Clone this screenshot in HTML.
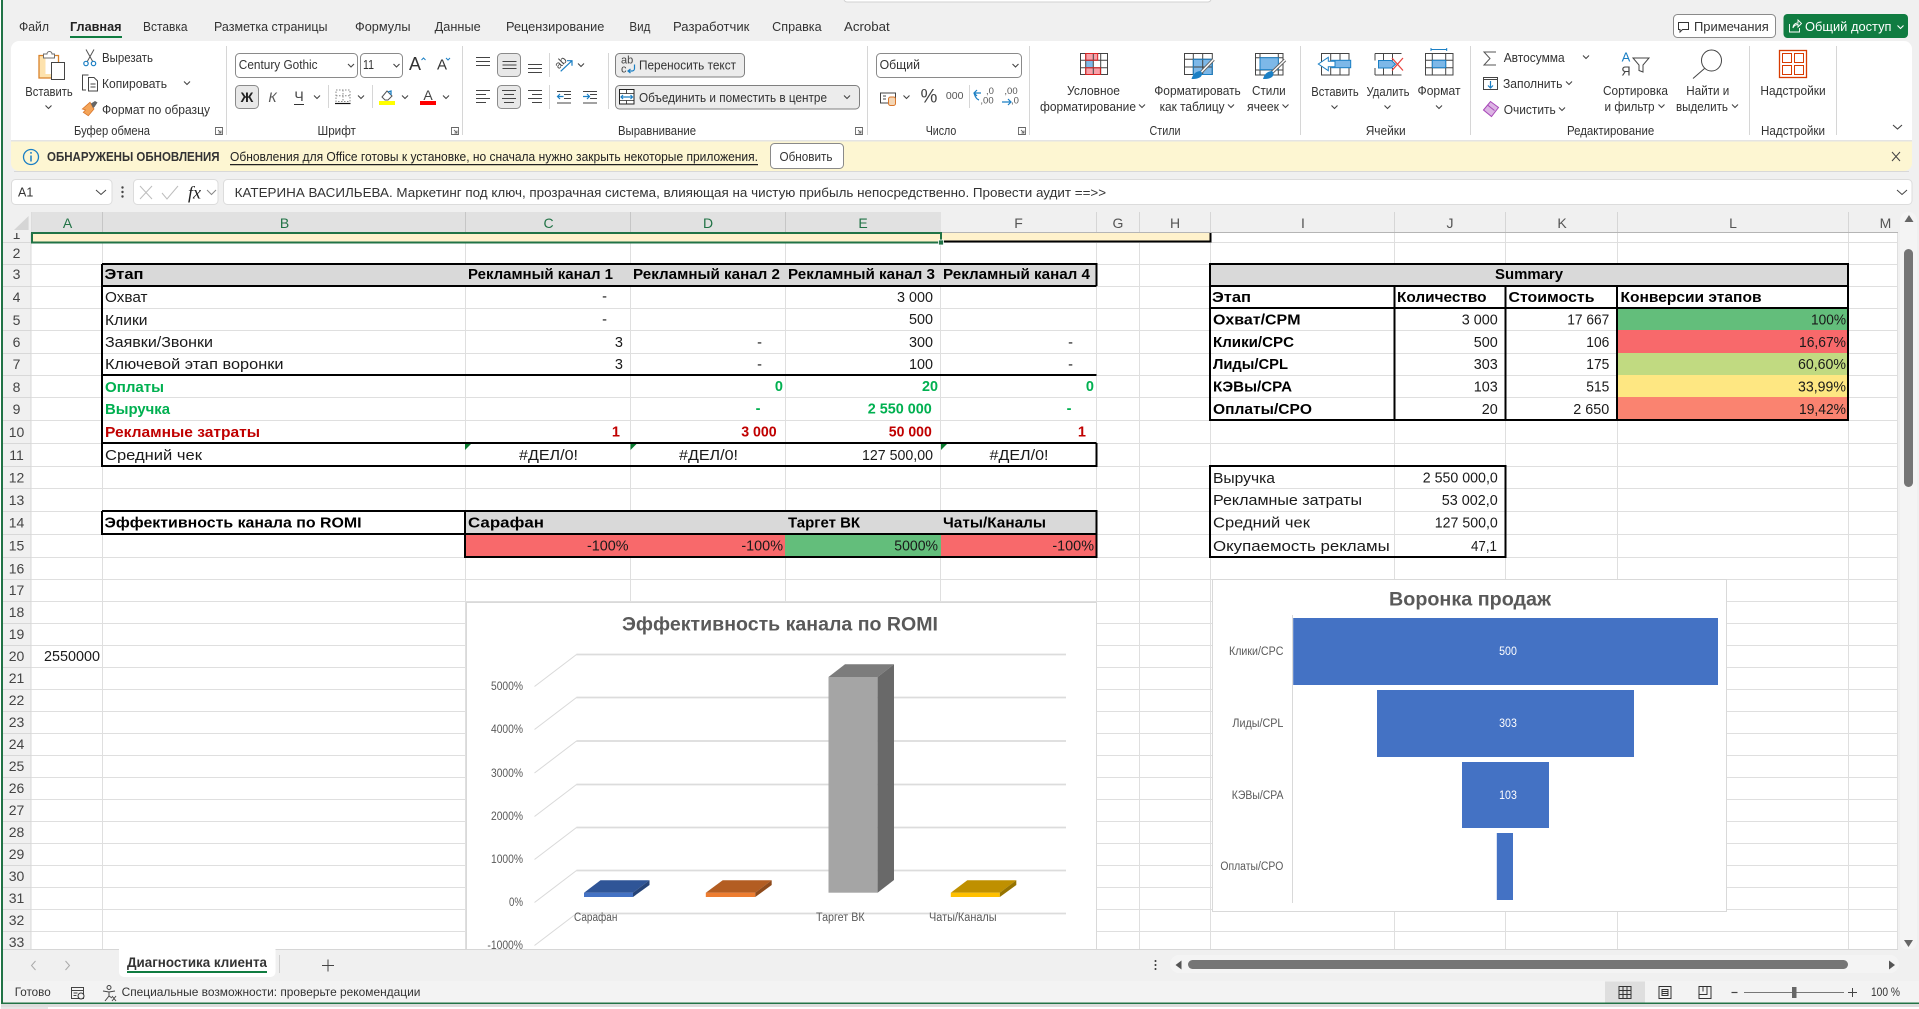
<!DOCTYPE html>
<html lang="ru"><head><meta charset="utf-8"><title>Excel</title>
<style>
html,body{margin:0;padding:0;background:#fff;width:1919px;height:1009px;overflow:hidden}
svg{display:block;position:absolute;left:0;top:0}
text{font-family:"Liberation Sans","DejaVu Sans",sans-serif;dominant-baseline:central;fill:#333;font-size:12.5px}
.m{text-anchor:middle}.e{text-anchor:end}
.b{font-weight:700}
.c text,text.c{font-size:14.5px;fill:#1a1a1a;transform:translateY(1px)}
.cb text{font-size:14.5px;font-weight:700;fill:#000;transform:translateY(1px)}
.g text{font-size:14.5px;font-weight:700;fill:#00b050;transform:translateY(1px)}
.r text{font-size:14.5px;font-weight:700;fill:#c00000;transform:translateY(1px)}
.rh text{font-size:14px;fill:#444;text-anchor:middle}
.ch text{font-size:14px;text-anchor:middle}
.ax text{font-size:11.5px;fill:#595959;transform:translateY(1px)}
.ln{fill:none;stroke:#444;stroke-width:1}
.bl{fill:none;stroke:#1b7fc4;stroke-width:1.2}
</style></head><body>
<svg width="1919" height="1009" viewBox="0 0 1919 1009" xmlns="http://www.w3.org/2000/svg">
<defs><path id="cv" d="M-3-1.5L0 1.5 3-1.5" fill="none" stroke="#444" stroke-width="1.1"/></defs>
<rect width="1919" height="1009" fill="#f0f0f0"/>
<rect x="1" y="0" width="2" height="1003" fill="#217346"/>
<rect x="0" y="0" width="1" height="1009" fill="#fff"/>

<!-- search box bottom -->
<rect x="844" y="-6" width="367" height="8" rx="3" fill="#fff" stroke="#d2d2d2"/>

<!-- tabs -->
<g>
<text x="19" y="27" textLength="30" lengthAdjust="spacingAndGlyphs">Файл</text>
<text x="70" y="27" textLength="51.5" lengthAdjust="spacingAndGlyphs" class="b" style="fill:#222">Главная</text>
<rect x="70" y="36" width="52" height="2" fill="#107c41"/>
<text x="143" y="27" textLength="44.5" lengthAdjust="spacingAndGlyphs">Вставка</text>
<text x="214" y="27" textLength="113.5" lengthAdjust="spacingAndGlyphs">Разметка страницы</text>
<text x="355" y="27" textLength="55.5" lengthAdjust="spacingAndGlyphs">Формулы</text>
<text x="434.7" y="27" textLength="46" lengthAdjust="spacingAndGlyphs">Данные</text>
<text x="506" y="27" textLength="98.4" lengthAdjust="spacingAndGlyphs">Рецензирование</text>
<text x="629.4" y="27" textLength="21" lengthAdjust="spacingAndGlyphs">Вид</text>
<text x="673" y="27" textLength="76.4" lengthAdjust="spacingAndGlyphs">Разработчик</text>
<text x="772.2" y="27" textLength="49.4" lengthAdjust="spacingAndGlyphs">Справка</text>
<text x="844" y="27" textLength="45.7" lengthAdjust="spacingAndGlyphs">Acrobat</text>
</g>

<!-- top right buttons -->
<rect x="1673.5" y="14.5" width="102" height="23" rx="4" fill="#fff" stroke="#8a8a8a"/>
<path d="M1678.500 22.500h10v7h-6l-2.500 2.500v-2.500h-1.500z" fill="none" stroke="#333"/>
<text x="1694" y="27" textLength="74.700" lengthAdjust="spacingAndGlyphs">Примечания</text>
<rect x="1783.500" y="14" width="124.500" height="24" rx="4" fill="#107c41"/>
<path d="M1789.500 24v8h10v-4M1793 28c0-3 2-5 5-5v-3l3.500 3.500L1798 27v-2.500c-2 0-4 1-5 3.500z" fill="none" stroke="#fff" stroke-width=".9"/>
<text x="1805" y="27" textLength="86.500" lengthAdjust="spacingAndGlyphs" style="fill:#fff">Общий доступ</text>
<path d="M1897.500 25.500l3 3 3-3" fill="none" stroke="#fff" stroke-width="1.100"/>

<!-- ribbon panel -->
<path d="M11 140V49a8 8 0 0 1 8-8H1904a8 8 0 0 1 8 8V140z" fill="#fff"/>
<!-- banner -->
<path d="M11 141H1912V163a8 8 0 0 1-8 8H19a8 8 0 0 1-8-8z" fill="#fdf6d2"/>
<rect x="11" y="140" width="1901" height="1.500" fill="#e4e4e4"/>
<path d="M14 171.500H1909" stroke="#d8d8d8" stroke-width="1"/>

<!-- ribbon separators -->
<path d="M226.500 46V135M462.500 46V135M867.500 46V135M1029.500 46V135M1300.500 46V135M1470.500 46V135M1749.500 46V135M1836.500 46V135" stroke="#d6d6d6"/>
<path d="M328.500 85V108M372.500 85V108M549.500 53V77M549.500 85V109M608.500 53V109M969.500 85V108" stroke="#d6d6d6"/>

<!-- clipboard group -->
<rect x="39" y="55" width="19.500" height="23" fill="#fff"/>
<path d="M39.500 55.500h6v22.500h-6zM39.500 74h12v4h-12z" fill="#fde2ad"/>
<path d="M44 55.500h-5v22.500h13M55 55.500h3.500v7" fill="none" stroke="#d9822b" stroke-width="1.300"/>
<path d="M43.500 58v-4h3.500a2.500 2.500 0 0 1 5 0h2.500v4z" fill="#fff" stroke="#6e6e6e"/>
<rect x="51.500" y="62.500" width="13" height="17" fill="#fff" stroke="#444"/>
<text x="49" y="92" class="m" textLength="47.400" lengthAdjust="spacingAndGlyphs">Вставить</text>
<use href="#cv" x="48.500" y="107"/>

<path d="M86 49.500l7 12.500M94 49.500l-7 12.500" stroke="#555" fill="none"/>
<circle cx="86" cy="63.500" r="2.200" fill="none" stroke="#1b7fc4" stroke-width="1.200"/><circle cx="93.500" cy="63.500" r="2.200" fill="none" stroke="#1b7fc4" stroke-width="1.200"/>
<text x="102" y="58" textLength="51" lengthAdjust="spacingAndGlyphs">Вырезать</text>
<path d="M86 90h-3.500v-15h6M90 77.500h4l3.500 3.500v10h-9V77.500zM90.500 84h5M90.500 87h5" class="ln"/>
<text x="102" y="84" textLength="65" lengthAdjust="spacingAndGlyphs">Копировать</text>
<use href="#cv" x="187" y="83"/>
<path d="M82.300 109L90 102.300 94 109 88.300 115.700 83.300 112.300 85.500 110z" fill="#f4a458" stroke="#d9762b" stroke-width=".8"/>
<path d="M91 103.500l4-2.500 2.500 1.500-3 4.500-1.500 1z" fill="#666"/>
<text x="102" y="110" textLength="108" lengthAdjust="spacingAndGlyphs">Формат по образцу</text>
<text x="112" y="131" class="m" textLength="76" lengthAdjust="spacingAndGlyphs">Буфер обмена</text>
<path id="lnc" d="M215.500 127.500h7v7h-7zM218 130l3 3M221 130.500v2.500h-2.500" fill="none" stroke="#666" stroke-width=".9"/>

<!-- font group -->
<rect x="235.500" y="53.500" width="122" height="24" rx="4" fill="#fff" stroke="#8a8a8a"/>
<text x="238.800" y="65" textLength="78.800" lengthAdjust="spacingAndGlyphs">Century Gothic</text>
<use href="#cv" x="351" y="65.500"/>
<rect x="360.500" y="53.500" width="42" height="24" rx="4" fill="#fff" stroke="#8a8a8a"/>
<text x="363" y="65" textLength="11" lengthAdjust="spacingAndGlyphs">11</text>
<use href="#cv" x="396.500" y="65.500"/>
<text x="415" y="64" class="m" style="font-size:18px">A</text><path d="M421.500 60l2-2 2 2" fill="none" stroke="#1b7fc4"/>
<text x="442" y="65" class="m" style="font-size:15px">A</text><path d="M446 58l2 2 2-2" fill="none" stroke="#1b7fc4"/>
<rect x="235.500" y="85.500" width="23" height="23" rx="4" fill="#e8e8e8" stroke="#8a8a8a"/>
<text x="247" y="97" class="m b" style="font-size:14px;fill:#222">Ж</text>
<text x="272.500" y="97" class="m" style="font-style:italic;font-size:14px;fill:#555">К</text>
<text x="299" y="96" class="m" style="font-size:14px;fill:#444">Ч</text><path d="M294 104.500h10" stroke="#333"/>
<use href="#cv" x="317" y="97"/>
<path d="M336 90h14v11.500h-14zM343 90v11.500M336 95.800h14" fill="none" stroke="#888" stroke-dasharray="1.500 1.500"/><path d="M335 103.500h15.500" stroke="#111" stroke-width="1.200"/>
<use href="#cv" x="361" y="97"/>
<path d="M382 97l5-6 5 5-4 4h-3z" fill="none" stroke="#555"/><path d="M388 92l3-1 0 4" fill="none" stroke="#1b7fc4" stroke-width="1.300"/>
<rect x="379" y="101" width="16" height="4" fill="#ffff00"/>
<use href="#cv" x="405" y="97"/>
<text x="428" y="95" class="m" style="font-size:14px;fill:#444">A</text>
<rect x="420" y="101" width="16" height="4" fill="#f00"/>
<use href="#cv" x="446" y="97"/>
<text x="336.700" y="131" class="m" textLength="38.400" lengthAdjust="spacingAndGlyphs">Шрифт</text>
<path d="M451.500 127.500h7v7h-7zM454 130l3 3M457 130.500v2.500h-2.500" fill="none" stroke="#666" stroke-width=".9"/>

<!-- alignment group -->
<rect x="497.500" y="53.500" width="23" height="23" rx="4" fill="#e8e8e8" stroke="#8a8a8a"/>
<rect x="497.500" y="85.500" width="23" height="23" rx="4" fill="#e8e8e8" stroke="#8a8a8a"/>
<path d="M476 57.500h14M476 61.500h14M476 65.500h14" class="ln"/>
<path d="M502.500 61.500h14M502.500 65h14M502.500 68.500h14" class="ln"/>
<path d="M528 64.500h14M528 68.500h14M528 72.500h14" class="ln"/>
<path d="M476 90.500h14M476 94.500h10M476 98.500h14M476 102.500h10" class="ln"/>
<path d="M502 90.500h14M504 94.500h10M502 98.500h14M504 102.500h10" class="ln"/>
<path d="M528 90.500h14M532 94.500h10M528 98.500h14M532 102.500h10" class="ln"/>
<text x="561" y="63" class="m" transform="rotate(-45 561 63)" style="font-size:11px;fill:#444">ab</text>
<path d="M560.700 71.300L572 60.700M567 60.700h5v5" class="bl"/>
<use href="#cv" x="581" y="65"/>
<path d="M557 91.500h14M564 94.500h7M564 98.500h7M557 103h14" class="ln"/>
<path d="M557.500 96.500h6M560 94l-2.500 2.500 2.500 2.500" class="bl"/>
<path d="M583 91.500h14M590 94.500h7M590 98.500h7M583 103h14" class="ln"/>
<path d="M583 96.500h6.500M587 94l2.500 2.500-2.500 2.500" class="bl"/>
<rect x="615.500" y="53.500" width="129" height="23.500" rx="4" fill="#ececec" stroke="#7f7f7f"/>
<text x="621" y="60.500" style="font-size:11px;fill:#444">ab</text><text x="621" y="69.500" style="font-size:11px;fill:#444">c</text>
<path d="M634.500 64.500v4a2.500 2.500 0 0 1-2.500 2.500h-4M630.500 69l-2.500 2 2.500 2" class="bl"/>
<text x="639" y="65.500" textLength="97" lengthAdjust="spacingAndGlyphs">Переносить текст</text>
<rect x="615.500" y="85.500" width="244" height="23.500" rx="4" fill="#ececec" stroke="#7f7f7f"/>
<rect x="619.500" y="89.500" width="14.500" height="14.500" fill="#fff" stroke="#222"/><path d="M619.500 93.500h14.500M619.500 100.500h14.500M626.500 89.500v4M626.500 100.500v3.500" stroke="#222" stroke-width=".8"/>
<path d="M621 97h11.500M623 95l-2 2 2 2M630.500 95l2 2-2 2" class="bl"/>
<text x="639" y="98" textLength="188" lengthAdjust="spacingAndGlyphs">Объединить и поместить в центре</text>
<use href="#cv" x="847" y="97"/>
<text x="657" y="131" class="m" textLength="78" lengthAdjust="spacingAndGlyphs">Выравнивание</text>
<path d="M855.500 127.500h7v7h-7zM858 130l3 3M861 130.500v2.500h-2.500" fill="none" stroke="#666" stroke-width=".9"/>

<!-- number group -->
<rect x="876.500" y="53.500" width="145" height="24" rx="4" fill="#fff" stroke="#8a8a8a"/>
<text x="879.600" y="65" textLength="40.400" lengthAdjust="spacingAndGlyphs">Общий</text>
<use href="#cv" x="1015.500" y="65.500"/>
<rect x="880.500" y="93" width="15" height="10" fill="#fff" stroke="#444"/><path d="M883 96h3M883 99h3" stroke="#444"/>
<rect x="888.500" y="97" width="7" height="8.500" rx="2" fill="#f4d6b5" stroke="#d9762b"/>
<use href="#cv" x="906.500" y="97"/>
<text x="929" y="97" class="m" style="font-size:19px;fill:#444">%</text>
<text x="954.700" y="96" class="m" style="font-size:10.500px;fill:#555">000</text>
<text x="990" y="91.500" style="font-size:9.500px;fill:#555" class="m">,0</text><text x="987" y="101" style="font-size:9.500px;fill:#555" class="m">,00</text>
<path d="M981 93h-7M977 90l-3 3 3 3M974 93c1 3 2 6 5 7" class="bl"/>
<text x="1011" y="91.500" style="font-size:9.500px;fill:#555" class="m">,00</text><text x="1015" y="101" style="font-size:9.500px;fill:#555" class="m">,0</text>
<path d="M1002 102h9M1008 99l3 3-3 3" class="bl"/>
<text x="941" y="131" class="m" textLength="30.600" lengthAdjust="spacingAndGlyphs">Число</text>
<path d="M1018.500 127.500h7v7h-7zM1021 130l3 3M1024 130.500v2.500h-2.500" fill="none" stroke="#666" stroke-width=".9"/>

<!-- styles group -->
<g transform="translate(1080 53)">
<rect x="5.700" y=".5" width="12" height="6.800" fill="#f9a0a8"/><rect x="5.700" y="7.300" width="7.600" height="7.400" fill="#7db8e8"/><rect x="5.700" y="14.700" width="14.700" height="6.800" fill="#f9a0a8"/>
<path d="M.5.500h27v21h-27zM.5 7.300h27M.5 14.700h27M13.300 .500v21M20.700 .500v21M5.700 .500v21" fill="none" stroke="#444"/>
<path d="M5.700 .500h12v6.800H5.700zM5.700 14.700h14.700v6.800H5.700z" fill="none" stroke="#d22"/>
</g>
<text x="1093.500" y="91" class="m" textLength="53" lengthAdjust="spacingAndGlyphs">Условное</text>
<text x="1040" y="107" textLength="96" lengthAdjust="spacingAndGlyphs">форматирование</text>
<use href="#cv" x="1142" y="106"/>
<g transform="translate(1184 53)">
<rect x="9.300" y="6.300" width="19" height="15.200" fill="#7db8e8"/>
<path d="M.5.500h27.800v21h-27.800zM.5 6.300h27.800M.5 14h27.800M9.300 .500v21M18.700 .500v21" fill="none" stroke="#444"/>
<path d="M9.300 6.300h19v15.200h-19z" fill="none" stroke="#1b7fc4"/>
<path d="M29.500 6.500L17.500 19" stroke="#666" stroke-width="3.400"/><path d="M29.500 6.500L17.500 19" stroke="#fff" stroke-width="1.400"/>
<path d="M7.500 26c1.500-5 4-7.500 9-8 2 2 2 4 0 6-3 2-6 2-9 2z" fill="#1b7fc4"/>
</g>
<text x="1197.500" y="91" class="m" textLength="86.500" lengthAdjust="spacingAndGlyphs">Форматировать</text>
<text x="1159.600" y="107" textLength="65" lengthAdjust="spacingAndGlyphs">как таблицу</text>
<use href="#cv" x="1231" y="106"/>
<g transform="translate(1255 53)">
<path d="M.5.500h27.500v21.500h-27.500zM.5 4.700h27.500M.5 17h27.500M5 .500v21.500M23.300 .500v21.500" fill="none" stroke="#444"/>
<rect x="5" y="4.700" width="18.300" height="12" fill="#7db8e8" stroke="#1b7fc4"/>
<path d="M30 7L17 19.500" stroke="#666" stroke-width="3.400"/><path d="M30 7L17 19.500" stroke="#fff" stroke-width="1.400"/>
<path d="M8 26c1.500-5 4-7.500 9-8 2 2 2 4 0 6-3 2-6 2-9 2z" fill="#1b7fc4"/>
</g>
<text x="1252" y="91" textLength="33.700" lengthAdjust="spacingAndGlyphs">Стили</text>
<text x="1247" y="107" textLength="32" lengthAdjust="spacingAndGlyphs">ячеек</text>
<use href="#cv" x="1285.500" y="106"/>
<text x="1165" y="131" class="m" textLength="31" lengthAdjust="spacingAndGlyphs">Стили</text>

<!-- cells group -->
<g transform="translate(1321 53)">
<path d="M.5.500h27.500v21.500h-27.500zM9.700 .500v21.500M19 .500v21.500" fill="none" stroke="#444"/>
<rect x="10.700" y="7.300" width="19" height="7.400" fill="#7db8e8" stroke="#1b7fc4"/>
<path d="M-2.700 11L7.300 4.300V8.300H14V13.700H7.300V17.700z" fill="#fff" stroke="#1b7fc4"/>
</g>
<text x="1335" y="92" class="m" textLength="47.400" lengthAdjust="spacingAndGlyphs">Вставить</text>
<use href="#cv" x="1334.500" y="107"/>
<g transform="translate(1374.500 53)">
<path d="M.5.500h26.500M.5 22h26.500M.5.500v7M.5 15v7M9 .500v7M18 .500v7M9 15v7M18 15v7" fill="none" stroke="#444"/>
<path d="M4 7.500h13l4 3.700-4 3.800H4z" fill="#7db8e8" stroke="#1b7fc4"/>
<path d="M17.500 5l11 12.500M28.500 5l-11 12.500" stroke="#e8433e" stroke-width="1.200"/>
</g>
<text x="1388" y="92" class="m" textLength="43" lengthAdjust="spacingAndGlyphs">Удалить</text>
<use href="#cv" x="1387.500" y="107"/>
<g transform="translate(1425 53)">
<path d="M.5.500h27.500v21.500h-27.500zM.5 7.300h27.500M.5 14.700h27.500M7.300 .500v21.500M20.700 .500v21.500" fill="none" stroke="#444"/>
<rect x="7.300" y="7.300" width="13.400" height="7.400" fill="#7db8e8" stroke="#1b7fc4"/>
<path d="M6 -3.500h15.700M6 -5v3M21.700 -5v3" stroke="#1b7fc4" fill="none"/>
</g>
<text x="1439" y="91" class="m" textLength="43" lengthAdjust="spacingAndGlyphs">Формат</text>
<use href="#cv" x="1439" y="107"/>
<text x="1385.700" y="131" class="m" textLength="40" lengthAdjust="spacingAndGlyphs">Ячейки</text>

<!-- editing group -->
<path d="M1496 52h-12l6 6.500-6 6.500h12" fill="none" stroke="#555"/>
<text x="1503.700" y="58" textLength="61" lengthAdjust="spacingAndGlyphs">Автосумма</text>
<use href="#cv" x="1586" y="57"/>
<rect x="1483.500" y="77.500" width="14" height="12" fill="#fff" stroke="#444"/><path d="M1483.500 79.500h14" stroke="#444"/><path d="M1490.500 81v7M1488 85.500l2.500 2.500 2.500-2.500" class="bl"/>
<text x="1503" y="84" textLength="59.400" lengthAdjust="spacingAndGlyphs">Заполнить</text>
<use href="#cv" x="1569" y="83"/>
<path d="M1483.500 110l7-8.500 8 6-7 9z" fill="#dcb4e4" stroke="#a848b8"/><path d="M1487.500 105l7 5.500" stroke="#a848b8"/>
<text x="1503.700" y="110" textLength="52" lengthAdjust="spacingAndGlyphs">Очистить</text>
<use href="#cv" x="1562" y="109"/>
<text x="1626" y="57" class="m" style="font-size:13px;fill:#1b7fc4">А</text>
<text x="1626" y="71" class="m" style="font-size:13px;fill:#444">Я</text>
<path d="M1633 58h16l-6 7v7l-4-1.500V65z" fill="none" stroke="#444"/>
<text x="1635.500" y="91" class="m" textLength="65" lengthAdjust="spacingAndGlyphs">Сортировка</text>
<text x="1604.500" y="107" textLength="50" lengthAdjust="spacingAndGlyphs">и фильтр</text>
<use href="#cv" x="1661.500" y="106"/>
<ellipse cx="1711.500" cy="60.500" rx="10" ry="10.500" fill="none" stroke="#444"/><path d="M1704.500 68.500l-11.500 10" stroke="#444"/>
<text x="1707.800" y="91" class="m" textLength="43" lengthAdjust="spacingAndGlyphs">Найти и</text>
<text x="1676" y="107" textLength="52" lengthAdjust="spacingAndGlyphs">выделить</text>
<use href="#cv" x="1735" y="106"/>
<text x="1610.600" y="131" class="m" textLength="87.300" lengthAdjust="spacingAndGlyphs">Редактирование</text>

<!-- add-ins -->
<rect x="1779.500" y="50.500" width="27" height="27" fill="none" stroke="#d83b01" stroke-width="1.300"/>
<path d="M1782.500 53.500h9v9h-9zM1794.500 53.500h9v9h-9zM1782.500 65.500h9v9h-9zM1794.500 65.500h9v9h-9z" fill="none" stroke="#d83b01"/>
<text x="1793" y="91" class="m" textLength="65.300" lengthAdjust="spacingAndGlyphs">Надстройки</text>
<text x="1793" y="131" class="m" textLength="64" lengthAdjust="spacingAndGlyphs">Надстройки</text>
<path d="M1893 125l4.500 4 4.500-4" fill="none" stroke="#444" stroke-width="1.100"/>

<!-- banner content -->
<circle cx="31" cy="157" r="7.500" fill="none" stroke="#1b7fc4" stroke-width="1.300"/>
<path d="M31 155.500v6M31 152v1.800" stroke="#1b7fc4" stroke-width="1.500"/>
<text x="47" y="157" textLength="172.600" lengthAdjust="spacingAndGlyphs" class="b" style="font-size:12.500px">ОБНАРУЖЕНЫ ОБНОВЛЕНИЯ</text>
<text x="230" y="157" textLength="528" lengthAdjust="spacingAndGlyphs" style="text-decoration:underline;fill:#222">Обновления для Office готовы к установке, но сначала нужно закрыть некоторые приложения.</text>
<rect x="770.500" y="143.500" width="73" height="25" rx="4" fill="#fff" stroke="#8a8a8a"/>
<text x="806" y="157" class="m" textLength="53" lengthAdjust="spacingAndGlyphs">Обновить</text>
<path d="M1892 152l8 9M1900 152l-8 9" stroke="#444" fill="none"/>

<!-- formula bar -->
<rect x="11.500" y="179.500" width="100.500" height="25" rx="4" fill="#fff" stroke="#dcdcdc"/>
<text x="18" y="192.500">A1</text>
<path d="M96 190l5 4.500 5-4.500" fill="none" stroke="#444"/>
<circle cx="122.500" cy="187.500" r="1.200" fill="#444"/><circle cx="122.500" cy="192" r="1.200" fill="#444"/><circle cx="122.500" cy="196.500" r="1.200" fill="#444"/>
<rect x="133.500" y="179.500" width="84.500" height="25" rx="4" fill="#fff" stroke="#dcdcdc"/>
<path d="M140 186l12 13M152 186l-12 13" stroke="#bdbdbd" fill="none"/>
<path d="M162 193l5 6 11-13" stroke="#bdbdbd" fill="none"/>
<text x="194.500" y="192.500" class="m" style="font-family:'Liberation Serif',serif;font-style:italic;font-size:18px;fill:#222">fx</text>
<path d="M207 190l4.500 4.500 4.500-4.500" fill="none" stroke="#888"/>
<rect x="223.500" y="179.500" width="1688.500" height="25" rx="4" fill="#fff" stroke="#dcdcdc"/>
<text x="234.700" y="192.500" textLength="871.400" lengthAdjust="spacingAndGlyphs" style="font-size:13px">КАТЕРИНА ВАСИЛЬЕВА. Маркетинг под ключ, прозрачная система, влияющая на чистую прибыль непосредственно. Провести аудит ==&gt;&gt;</text>
<path d="M1897 190l5 4.500 5-4.500" fill="none" stroke="#444"/>

<!-- column headers -->
<rect x="31" y="212" width="910" height="20.500" fill="#e1e1e1"/>
<rect x="941" y="212" width="957" height="20.500" fill="#f0f0f0"/>
<rect x="3" y="212" width="28" height="20.500" fill="#f0f0f0"/>
<polygon points="28.600,216 28.600,230 14,230" fill="#d5d5d5"/>
<path d="M102.500 212V232M465.500 212V232M630.500 212V232M785.500 212V232" stroke="#c6c6c6"/>
<path d="M1096.500 212V232M1139.500 212V232M1210.500 212V232M1394.500 212V232M1505.500 212V232M1617.500 212V232M1848.500 212V232" stroke="#d6d6d6"/>
<g class="ch">
<text x="67.500" y="223" style="fill:#217346">A</text><text x="284.500" y="223" style="fill:#217346">B</text><text x="548.500" y="223" style="fill:#217346">C</text><text x="708" y="223" style="fill:#217346">D</text><text x="863" y="223" style="fill:#217346">E</text>
<text x="1018.500" y="223" style="fill:#555">F</text><text x="1118" y="223" style="fill:#555">G</text><text x="1175" y="223" style="fill:#555">H</text><text x="1303" y="223" style="fill:#555">I</text><text x="1450" y="223" style="fill:#555">J</text><text x="1562" y="223" style="fill:#555">K</text><text x="1733" y="223" style="fill:#555">L</text><text x="1885.500" y="223" style="fill:#555;text-anchor:middle">M</text>
</g>
<rect x="31" y="232" width="1867" height="1" fill="#b5b5b5"/>

<!-- sheet area -->
<rect x="31" y="233" width="1867" height="717" fill="#fff"/>
<rect x="3" y="233" width="28" height="717" fill="#f0f0f0"/>
<path d="M31 242.500H1898M31 264.500H1898M31 286.500H1898M31 308.500H1898M31 330.500H1898M31 353.500H1898M31 375.500H1898M31 397.500H1898M31 420.500H1898M31 443.500H1898M31 466.500H1898M31 488.500H1898M31 511.500H1898M31 534.500H1898M31 557.500H1898M31 579.500H1898M31 601.500H1898M31 623.500H1898M31 645.500H1898M31 667.500H1898M31 689.500H1898M31 711.500H1898M31 733.500H1898M31 755.500H1898M31 777.500H1898M31 799.500H1898M31 821.500H1898M31 843.500H1898M31 865.500H1898M31 887.500H1898M31 909.500H1898M31 931.500H1898" stroke="#dfdfdf"/>
<path d="M102.500 233V950M465.500 233V950M630.500 233V950M785.500 233V950M940.500 233V950M1096.500 233V950M1139.500 233V950M1210.500 233V950M1394.500 233V950M1505.500 233V950M1617.500 233V950M1848.500 233V950M1897.500 233V950" stroke="#dfdfdf"/>
<path d="M3 242.500H31M3 264.500H31M3 286.500H31M3 308.500H31M3 330.500H31M3 353.500H31M3 375.500H31M3 397.500H31M3 420.500H31M3 443.500H31M3 466.500H31M3 488.500H31M3 511.500H31M3 534.500H31M3 557.500H31M3 579.500H31M3 601.500H31M3 623.500H31M3 645.500H31M3 667.500H31M3 689.500H31M3 711.500H31M3 733.500H31M3 755.500H31M3 777.500H31M3 799.500H31M3 821.500H31M3 843.500H31M3 865.500H31M3 887.500H31M3 909.500H31M3 931.500H31M31 212V950" stroke="#d8d8d8"/>

<!-- row 1 -->
<rect x="31" y="233" width="1179" height="8.500" fill="#fff2cc"/>
<path d="M941 241.500H1210.500V233" fill="none" stroke="#000" stroke-width="2"/>
<rect x="32" y="233" width="909" height="9.500" fill="none" stroke="#217346" stroke-width="2"/>
<rect x="938.500" y="240" width="5" height="5" fill="#217346" stroke="#fff" stroke-width=".8"/>

<!-- row headers -->
<g class="rh">
<text x="16.500" y="234">1</text>
<text x="16.500" y="253">2</text><text x="16.500" y="274">3</text><text x="16.500" y="297">4</text><text x="16.500" y="320">5</text><text x="16.500" y="342">6</text><text x="16.500" y="364">7</text><text x="16.500" y="387">8</text><text x="16.500" y="409">9</text><text x="16.500" y="432">10</text><text x="16.500" y="455">11</text><text x="16.500" y="477.500">12</text><text x="16.500" y="500">13</text><text x="16.500" y="522.500">14</text><text x="16.500" y="545.500">15</text><text x="16.500" y="568.500">16</text><text x="16.500" y="590">17</text><text x="16.500" y="612">18</text><text x="16.500" y="634">19</text><text x="16.500" y="656">20</text><text x="16.500" y="678">21</text><text x="16.500" y="700">22</text><text x="16.500" y="722">23</text><text x="16.500" y="744">24</text><text x="16.500" y="766">25</text><text x="16.500" y="788">26</text><text x="16.500" y="810">27</text><text x="16.500" y="832">28</text><text x="16.500" y="854">29</text><text x="16.500" y="876">30</text><text x="16.500" y="898">31</text><text x="16.500" y="920">32</text><text x="16.500" y="942">33</text>
</g>
<rect x="3" y="212" width="28" height="21" fill="#f0f0f0"/>
<polygon points="28.600,216 28.600,230 14,230" fill="#d5d5d5"/>

<!-- table 1 fills + lines -->
<rect x="102" y="264" width="994" height="22" fill="#d9d9d9"/>
<path d="M102 264H1096.500V286M102 264V466H1096.500V443M102 286H1096.500M102 375H1096.500M102 443H1096.500" fill="none" stroke="#000" stroke-width="2"/>
<polygon points="465,444 471,444 465,450" fill="#0a7a2f"/><polygon points="630.500,444 636.500,444 630.500,450" fill="#0a7a2f"/><polygon points="941,444 947,444 941,450" fill="#0a7a2f"/>
<g class="cb">
<text x="104.500" y="274" textLength="39" lengthAdjust="spacingAndGlyphs">Этап</text>
<text x="468" y="274" textLength="145" lengthAdjust="spacingAndGlyphs">Рекламный канал 1</text>
<text x="633" y="274" textLength="147" lengthAdjust="spacingAndGlyphs">Рекламный канал 2</text>
<text x="788" y="274" textLength="147" lengthAdjust="spacingAndGlyphs">Рекламный канал 3</text>
<text x="943" y="274" textLength="147" lengthAdjust="spacingAndGlyphs">Рекламный канал 4</text>
</g>
<g class="c">
<text x="105" y="297" textLength="42.500" lengthAdjust="spacingAndGlyphs">Охват</text>
<text x="105" y="320" textLength="42.500" lengthAdjust="spacingAndGlyphs">Клики</text>
<text x="105" y="342" textLength="108" lengthAdjust="spacingAndGlyphs">Заявки/Звонки</text>
<text x="105" y="364" textLength="178.500" lengthAdjust="spacingAndGlyphs">Ключевой этап воронки</text>
<text x="105" y="455" textLength="97" lengthAdjust="spacingAndGlyphs">Средний чек</text>
<text x="604.500" y="296" class="m">-</text><text x="604.500" y="319" class="m">-</text>
<text x="623" y="342" class="e">3</text><text x="623" y="364" class="e">3</text>
<text x="759.500" y="342" class="m">-</text><text x="759.500" y="364" class="m">-</text>
<text x="1070.500" y="342" class="m">-</text><text x="1070.500" y="364" class="m">-</text>
<text x="933" y="297" class="e" textLength="36" lengthAdjust="spacingAndGlyphs">3 000</text>
<text x="933" y="319" class="e" textLength="24" lengthAdjust="spacingAndGlyphs">500</text>
<text x="933" y="342" class="e" textLength="24" lengthAdjust="spacingAndGlyphs">300</text>
<text x="933" y="364" class="e" textLength="24" lengthAdjust="spacingAndGlyphs">100</text>
<text x="548.500" y="455" class="m" textLength="59" lengthAdjust="spacingAndGlyphs">#ДЕЛ/0!</text>
<text x="708.500" y="455" class="m" textLength="59" lengthAdjust="spacingAndGlyphs">#ДЕЛ/0!</text>
<text x="933" y="455" class="e" textLength="71" lengthAdjust="spacingAndGlyphs">127 500,00</text>
<text x="1019" y="455" class="m" textLength="59" lengthAdjust="spacingAndGlyphs">#ДЕЛ/0!</text>
</g>
<g class="g">
<text x="105" y="387" textLength="59" lengthAdjust="spacingAndGlyphs">Оплаты</text>
<text x="105" y="409" textLength="65" lengthAdjust="spacingAndGlyphs">Выручка</text>
<text x="783" y="386" class="e">0</text><text x="938" y="386" class="e" textLength="16" lengthAdjust="spacingAndGlyphs">20</text><text x="1094" y="386" class="e">0</text>
<text x="758" y="408" class="m">-</text><text x="931.800" y="408.500" class="e" textLength="64" lengthAdjust="spacingAndGlyphs">2 550 000</text><text x="1069" y="408" class="m">-</text>
</g>
<g class="r">
<text x="105" y="432" textLength="155" lengthAdjust="spacingAndGlyphs">Рекламные затраты</text>
<text x="620" y="431.500" class="e">1</text>
<text x="776.700" y="431.500" class="e" textLength="35.500" lengthAdjust="spacingAndGlyphs">3 000</text>
<text x="931.800" y="431.500" class="e" textLength="43" lengthAdjust="spacingAndGlyphs">50 000</text>
<text x="1086" y="431.500" class="e">1</text>
</g>

<!-- table 2 -->
<rect x="465" y="511" width="631" height="23" fill="#d9d9d9"/>
<rect x="465" y="534" width="320" height="23" fill="#f8696b"/><rect x="785" y="534" width="156" height="23" fill="#63be7b"/><rect x="941" y="534" width="155" height="23" fill="#f8696b"/>
<path d="M102 511H1096.500V557H465V511M102 511V534H465M465 534H1096.500" fill="none" stroke="#000" stroke-width="2"/>
<g class="cb">
<text x="104.500" y="522.700" textLength="257" lengthAdjust="spacingAndGlyphs">Эффективность канала по ROMI</text>
<text x="468" y="522.700" textLength="76" lengthAdjust="spacingAndGlyphs">Сарафан</text>
<text x="788" y="522.700" textLength="72" lengthAdjust="spacingAndGlyphs">Таргет ВК</text>
<text x="943" y="522.700" textLength="103" lengthAdjust="spacingAndGlyphs">Чаты/Каналы</text>
</g>
<g class="c">
<text x="628.600" y="545.700" class="e" textLength="41.600" lengthAdjust="spacingAndGlyphs">-100%</text>
<text x="783" y="545.700" class="e" textLength="41.600" lengthAdjust="spacingAndGlyphs">-100%</text>
<text x="938" y="545.700" class="e" textLength="43.700" lengthAdjust="spacingAndGlyphs">5000%</text>
<text x="1094" y="545.700" class="e" textLength="41.600" lengthAdjust="spacingAndGlyphs">-100%</text>
</g>

<!-- summary -->
<rect x="1210" y="264" width="638" height="22" fill="#d9d9d9"/>
<rect x="1617" y="308" width="231" height="22" fill="#63be7b"/>
<rect x="1617" y="330" width="231" height="23" fill="#f8696b"/>
<rect x="1617" y="353" width="231" height="22" fill="#c1da81"/>
<rect x="1617" y="375" width="231" height="22" fill="#fee782"/>
<rect x="1617" y="397" width="231" height="23" fill="#fa8370"/>
<path d="M1210 264H1848V420H1210zM1210 286H1848M1210 308H1848M1394.500 286V420M1505.500 286V420M1617 286V420" fill="none" stroke="#000" stroke-width="2"/>
<g class="cb">
<text x="1529" y="274" class="m" textLength="68" lengthAdjust="spacingAndGlyphs">Summary</text>
<text x="1212" y="297" textLength="39" lengthAdjust="spacingAndGlyphs">Этап</text>
<text x="1397" y="297" textLength="89.500" lengthAdjust="spacingAndGlyphs">Количество</text>
<text x="1508.500" y="297" textLength="86" lengthAdjust="spacingAndGlyphs">Стоимость</text>
<text x="1620.500" y="297" textLength="141" lengthAdjust="spacingAndGlyphs">Конверсии этапов</text>
<text x="1213" y="319.500" textLength="87.500" lengthAdjust="spacingAndGlyphs">Охват/CPM</text>
<text x="1213" y="342" textLength="81" lengthAdjust="spacingAndGlyphs">Клики/CPC</text>
<text x="1213" y="364" textLength="75" lengthAdjust="spacingAndGlyphs">Лиды/CPL</text>
<text x="1213" y="386.500" textLength="79" lengthAdjust="spacingAndGlyphs">КЭВы/CPA</text>
<text x="1213" y="409" textLength="99" lengthAdjust="spacingAndGlyphs">Оплаты/CPO</text>
</g>
<g class="c">
<text x="1497.800" y="319.500" class="e" textLength="36" lengthAdjust="spacingAndGlyphs">3 000</text>
<text x="1497.800" y="342" class="e" textLength="24" lengthAdjust="spacingAndGlyphs">500</text>
<text x="1497.800" y="364" class="e" textLength="24" lengthAdjust="spacingAndGlyphs">303</text>
<text x="1497.800" y="386.500" class="e" textLength="24" lengthAdjust="spacingAndGlyphs">103</text>
<text x="1497.800" y="409" class="e" textLength="16" lengthAdjust="spacingAndGlyphs">20</text>
<text x="1609.300" y="319.500" class="e" textLength="42" lengthAdjust="spacingAndGlyphs">17 667</text>
<text x="1609.300" y="342" class="e" textLength="23" lengthAdjust="spacingAndGlyphs">106</text>
<text x="1609.300" y="364" class="e" textLength="23" lengthAdjust="spacingAndGlyphs">175</text>
<text x="1609.300" y="386.500" class="e" textLength="23" lengthAdjust="spacingAndGlyphs">515</text>
<text x="1609.300" y="409" class="e" textLength="36" lengthAdjust="spacingAndGlyphs">2 650</text>
<text x="1846" y="319.500" class="e" textLength="35" lengthAdjust="spacingAndGlyphs">100%</text>
<text x="1846" y="342" class="e" textLength="47" lengthAdjust="spacingAndGlyphs">16,67%</text>
<text x="1846" y="364" class="e" textLength="48" lengthAdjust="spacingAndGlyphs">60,60%</text>
<text x="1846" y="386.500" class="e" textLength="48" lengthAdjust="spacingAndGlyphs">33,99%</text>
<text x="1846" y="409" class="e" textLength="47" lengthAdjust="spacingAndGlyphs">19,42%</text>
</g>

<!-- box 3 -->
<rect x="1210" y="466" width="295.500" height="91" fill="none" stroke="#000" stroke-width="2"/>
<g class="c">
<text x="1213" y="478" textLength="62" lengthAdjust="spacingAndGlyphs">Выручка</text>
<text x="1213" y="500" textLength="149" lengthAdjust="spacingAndGlyphs">Рекламные затраты</text>
<text x="1213" y="522.700" textLength="97" lengthAdjust="spacingAndGlyphs">Средний чек</text>
<text x="1213" y="546" textLength="176.700" lengthAdjust="spacingAndGlyphs">Окупаемость рекламы</text>
<text x="1497.800" y="477.500" class="e" textLength="75" lengthAdjust="spacingAndGlyphs">2 550 000,0</text>
<text x="1497.800" y="500" class="e" textLength="56" lengthAdjust="spacingAndGlyphs">53 002,0</text>
<text x="1497.800" y="522.700" class="e" textLength="63" lengthAdjust="spacingAndGlyphs">127 500,0</text>
<text x="1497" y="546" class="e" textLength="26" lengthAdjust="spacingAndGlyphs">47,1</text>
<text x="100" y="656" class="e" textLength="56" lengthAdjust="spacingAndGlyphs">2550000</text>
</g>

<!-- chart 1 -->
<rect x="466.500" y="602.500" width="630" height="360" fill="#fff" stroke="#d9d9d9"/>
<text x="780" y="625" class="m b" textLength="316" lengthAdjust="spacingAndGlyphs" style="font-size:19px;fill:#595959">Эффективность канала по ROMI</text>
<path d="M576.500 654.500H1066M576.500 697.500H1066M576.500 741H1066M576.500 784.500H1066M576.500 827.500H1066M576.500 870.500H1066M576.500 913.500H1066" stroke="#dcdcdc" stroke-width="1.700"/>
<path d="M534.500 686.500L576.500 654.500M534.500 729.500L576.500 697.500M534.500 773L576.500 741M534.500 816.500L576.500 784.500M534.500 859.500L576.500 827.500M534.500 902.500L576.500 870.500M534.500 945.500L576.500 913.500" stroke="#d9d9d9"/>
<g class="ax">
<text x="523" y="686" class="e" textLength="32" lengthAdjust="spacingAndGlyphs">5000%</text>
<text x="523" y="729" class="e" textLength="32" lengthAdjust="spacingAndGlyphs">4000%</text>
<text x="523" y="773" class="e" textLength="32" lengthAdjust="spacingAndGlyphs">3000%</text>
<text x="523" y="816" class="e" textLength="32" lengthAdjust="spacingAndGlyphs">2000%</text>
<text x="523" y="859" class="e" textLength="32" lengthAdjust="spacingAndGlyphs">1000%</text>
<text x="523" y="902" class="e" textLength="14" lengthAdjust="spacingAndGlyphs">0%</text>
<text x="523" y="945" class="e" textLength="35.600" lengthAdjust="spacingAndGlyphs">-1000%</text>
<text x="574" y="917" textLength="43.400" lengthAdjust="spacingAndGlyphs">Сарафан</text>
<text x="816" y="917" textLength="48.600" lengthAdjust="spacingAndGlyphs">Таргет ВК</text>
<text x="929" y="917" textLength="67.600" lengthAdjust="spacingAndGlyphs">Чаты/Каналы</text>
</g>
<polygon points="584,892.700 600.500,880.300 649.500,880.300 633,892.700" fill="#2f5597"/><rect x="584" y="892.700" width="49" height="4.300" fill="#4472c4"/><polygon points="633,892.700 649.500,880.300 649.500,885 633,897" fill="#264478"/>
<polygon points="705.800,892.700 722.700,880.300 771.700,880.300 755.300,892.700" fill="#b35d22"/><rect x="705.800" y="892.700" width="49.500" height="4.300" fill="#ed7d31"/><polygon points="755.300,892.700 771.700,880.300 771.700,885 755.300,897" fill="#8e4a1b"/>
<polygon points="828.500,677 845,664.300 894,664.300 877.600,677" fill="#7c7c7c"/><rect x="828.500" y="677" width="49" height="215.700" fill="#a5a5a5"/><polygon points="877.600,677 894,664.300 894,880 877.600,892.700" fill="#696969"/>
<polygon points="950.800,892.700 967.300,880.300 1016.300,880.300 999.800,892.700" fill="#bf9000"/><rect x="950.800" y="892.700" width="49" height="4.300" fill="#ffc000"/><polygon points="999.800,892.700 1016.300,880.300 1016.300,885 999.800,897" fill="#967300"/>

<!-- chart 2 -->
<rect x="1212.500" y="579.500" width="514" height="332" fill="#fff" stroke="#d9d9d9"/>
<text x="1470" y="600" class="m b" textLength="162" lengthAdjust="spacingAndGlyphs" style="font-size:19px;fill:#595959">Воронка продаж</text>
<path d="M1292.500 615V903" stroke="#d9d9d9"/>
<rect x="1293.200" y="618" width="424.800" height="67" fill="#4472c4"/>
<rect x="1377" y="690" width="257" height="67" fill="#4472c4"/>
<rect x="1462" y="762" width="87" height="66" fill="#4472c4"/>
<rect x="1496.800" y="833" width="16.200" height="67" fill="#4472c4"/>
<g class="ax">
<text x="1283.400" y="651" class="e" textLength="54.400" lengthAdjust="spacingAndGlyphs">Клики/CPC</text>
<text x="1283.400" y="723" class="e" textLength="51" lengthAdjust="spacingAndGlyphs">Лиды/CPL</text>
<text x="1283.400" y="795" class="e" textLength="51.600" lengthAdjust="spacingAndGlyphs">КЭВы/CPA</text>
<text x="1283.400" y="866" class="e" textLength="63" lengthAdjust="spacingAndGlyphs">Оплаты/CPO</text>
<text x="1508" y="651" class="m" textLength="17.700" lengthAdjust="spacingAndGlyphs" style="fill:#fff">500</text>
<text x="1508" y="723" class="m" textLength="17.700" lengthAdjust="spacingAndGlyphs" style="fill:#fff">303</text>
<text x="1508" y="795" class="m" textLength="17.700" lengthAdjust="spacingAndGlyphs" style="fill:#fff">103</text>
</g>

<!-- vertical scrollbar -->
<rect x="1898" y="212" width="21" height="738" fill="#f0f0f0"/>
<rect x="1900" y="212" width="17" height="738" rx="8" fill="#f4f4f4"/>
<polygon points="1909,215 1913.500,222 1904.500,222" fill="#666"/>
<rect x="1904" y="249" width="9" height="238" rx="4.500" fill="#757575"/>
<polygon points="1908.500,947 1904,940 1913,940" fill="#666"/>

<!-- bottom area -->
<rect x="3" y="949" width="1916" height="32" fill="#f0f0f0"/>
<rect x="3" y="949" width="1895" height="1" fill="#d6d6d6"/>
<path d="M119 949H275.500V972a5 5 0 0 1-5 5H124a5 5 0 0 1-5-5z" fill="#fff"/>
<path d="M36 961l-4 4.500 4 4.500M66 961l4 4.500-4 4.500" fill="none" stroke="#aaa" transform="translate(-.5 0)"/>
<text x="127" y="962.500" textLength="140" lengthAdjust="spacingAndGlyphs" style="font-size:13.500px;font-weight:700;fill:#333">Диагностика клиента</text>
<rect x="127" y="971" width="140" height="2" fill="#107c41"/>
<path d="M279.500 955V973" stroke="#cfcfcf"/>
<path d="M322 965.500h12M328 959.500v12" stroke="#444" fill="none"/>
<circle cx="1155.500" cy="961" r="1" fill="#333"/><circle cx="1155.500" cy="965" r="1" fill="#333"/><circle cx="1155.500" cy="969" r="1" fill="#333"/>
<rect x="1170" y="955" width="729" height="18" rx="9" fill="#f4f4f4"/>
<polygon points="1175.500,965 1181.500,960.500 1181.500,969.500" fill="#555"/>
<rect x="1188" y="960" width="660" height="9" rx="4.500" fill="#757575"/>
<polygon points="1895,965 1889,960.500 1889,969.500" fill="#555"/>

<!-- status -->
<rect x="3" y="981" width="1916" height="22" fill="#f3f3f3"/>
<text x="14.700" y="992" textLength="36" lengthAdjust="spacingAndGlyphs" style="font-size:12px">Готово</text>
<path d="M71.500 987.500h12v11h-12zM71.500 990.500h12M73.500 993h4M73.500 995.500h3" fill="none" stroke="#444"/><circle cx="81" cy="996" r="3" fill="#f3f3f3" stroke="#333"/>
<circle cx="109" cy="987.500" r="2" fill="none" stroke="#444"/><path d="M103 991l6 1 6-1M109 992v4l-4 5M109 996l3 2" fill="none" stroke="#444"/><path d="M112 996l4 5M116 996l-4 5" stroke="#444"/>
<text x="121.600" y="992" textLength="298.800" lengthAdjust="spacingAndGlyphs" style="font-size:12px">Специальные возможности: проверьте рекомендации</text>
<rect x="1605" y="981.500" width="40" height="21.500" fill="#dedede"/>
<path d="M1619 986.500h12v12h-12zM1619 990.500h12M1619 994.500h12M1623 986.500v12M1627 986.500v12" fill="none" stroke="#333"/>
<path d="M1659 986.500h12v12h-12zM1662 989.500h6v6h-6zM1662 991.500h6M1662 993.500h6" fill="none" stroke="#333"/>
<path d="M1699 986.500h12v12h-12zM1699 994.500h8v-8M1703 986.500v5" fill="none" stroke="#333"/>
<path d="M1731.500 992.500h6" stroke="#444" stroke-width="1.200"/>
<path d="M1744 992.500h100" stroke="#777"/>
<rect x="1792" y="987" width="4.500" height="11" fill="#666"/>
<path d="M1848 992.500h9M1852.500 988v9" stroke="#444"/>
<text x="1871" y="992" textLength="29" lengthAdjust="spacingAndGlyphs" style="font-size:12px">100 %</text>

<!-- window bottom -->
<rect x="0" y="1003" width="1919" height="6" fill="#fff"/>
<rect x="1" y="1002.500" width="1918" height="1.500" fill="#217346"/>
<rect x="1" y="1004" width="1918" height="3" fill="#dcdcdc"/>
<rect x="1" y="1007" width="47" height="2" fill="#e6e6e6"/>
</svg>
</body></html>
